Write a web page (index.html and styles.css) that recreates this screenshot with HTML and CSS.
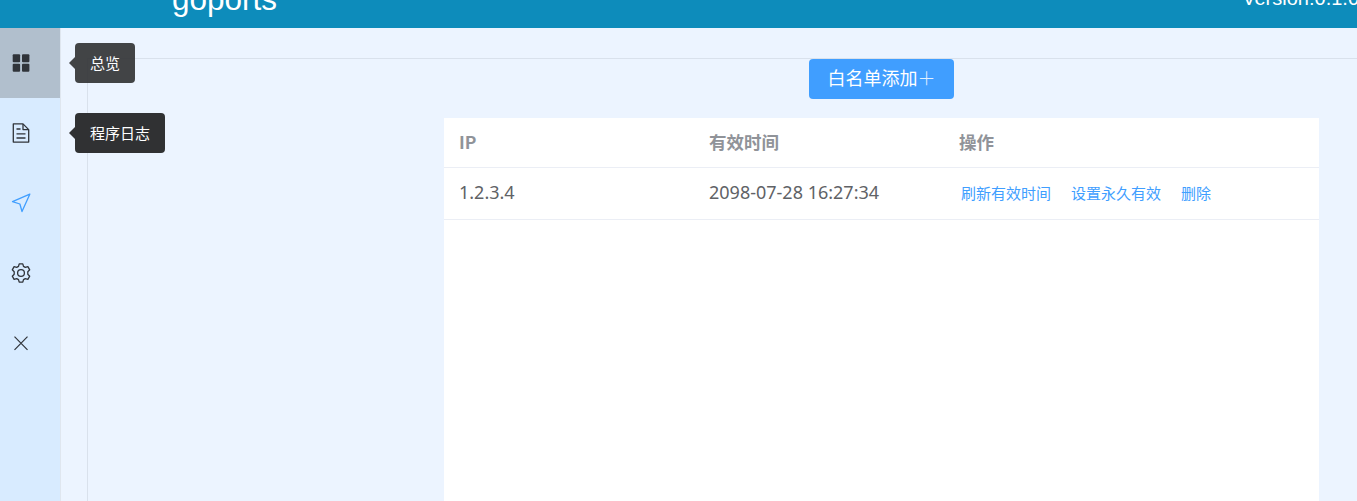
FILE: index.html
```html
<!DOCTYPE html>
<html lang="zh">
<head>
<meta charset="utf-8">
<title>goports</title>
<link rel="stylesheet" href="styles.css">
</head>
<body>
<div class="app">
  <header class="topbar">
    <div class="brand">goports</div>
    <div class="version">Version:0.1.0</div>
  </header>
  <div class="body">
    <nav class="sidebar">
      <div class="nav-item active">
        <svg class="icon" viewBox="0 0 20 20"><g fill="#30343a"><rect x="1.7" y="1.3" width="7.4" height="8" rx="1"/><rect x="11" y="1.3" width="7.4" height="8" rx="1"/><rect x="1.7" y="10.7" width="7.4" height="8" rx="1"/><rect x="11" y="10.7" width="7.4" height="8" rx="1"/></g></svg>
        <div class="tip tip-fade">总览</div>
      </div>
      <div class="nav-item">
        <svg class="icon" viewBox="0 0 20 20"><g fill="none" stroke="#30343a" stroke-width="1.3" stroke-linejoin="round"><path d="M2.300 .9h9.700l5.700 5.700v12.500H2.300z"/><path d="M12 .9v5.700h5.700"/><path d="M5.500 6h4M5.500 10.800h9M5.500 15h9"/></g></svg>
        <div class="tip">程序日志</div>
      </div>
      <div class="nav-item">
        <svg class="icon" viewBox="0 0 20 20"><path d="M18.800 1.200 1.500 8.600 8.900 11 11 18.500z" fill="none" stroke="#409eff" stroke-width="1.300" stroke-linejoin="round"/></svg>
      </div>
      <div class="nav-item">
        <svg class="icon" viewBox="0 0 20 20"><g fill="none" stroke="#30343a" stroke-width="1.300" stroke-linejoin="round"><path d="M8.200 .8h3.600l.7 2.600 1.800 1 2.600-.7 1.800 3.100-1.900 1.900v2.600l1.900 1.900-1.800 3.100-2.600-.7-1.800 1-.7 2.600H8.200l-.7-2.600-1.800-1-2.600.7-1.800-3.100 1.900-1.900V8.700L1.300 6.800l1.800-3.100 2.600.7 1.800-1z"/><circle cx="10" cy="10" r="3.400"/></g></svg>
      </div>
      <div class="nav-item">
        <svg class="icon" viewBox="0 0 20 20"><path d="M3.500 3.700l13 13.100M16.500 3.700l-13 13.100" fill="none" stroke="#30343a" stroke-width="1.200"/></svg>
      </div>
    </nav>
    <main class="main">
      <div class="panel">
        <div class="toolbar"><button class="add-btn">白名单添加<span class="plus">＋</span></button></div>
        <div class="table">
          <div class="row head">
            <div class="cell c1">IP</div>
            <div class="cell c2">有效时间</div>
            <div class="cell c3">操作</div>
          </div>
          <div class="row data">
            <div class="cell c1">1.2.3.4</div>
            <div class="cell c2">2098-07-28 16:27:34</div>
            <div class="cell c3 links"><a>刷新有效时间</a><a>设置永久有效</a><a>删除</a></div>
          </div>
        </div>
      </div>
    </main>
  </div>
</div>
</body>
</html>
```
FILE: styles.css
```css
* { box-sizing: border-box; }
html, body { margin: 0; height: 100%; overflow: hidden; }
body { font-family: "Noto Sans", "Noto Sans CJK SC", sans-serif; background: #ecf4ff; }
.app { height: 501px; display: flex; flex-direction: column; overflow: hidden; }
.topbar { flex: 0 0 28px; background: #0d8cbb; color: #fff; display: flex; align-items: flex-start; justify-content: space-between; overflow: hidden; padding-left: 172px; font-family: "Liberation Sans", Arial, sans-serif; }
.brand { font-size: 31.5px; line-height: 32px; margin-top: -17px; }
.version { font-size: 20px; line-height: 20px; margin-top: -12px; margin-right: -2px; }
.body { flex: 1; display: flex; min-height: 0; }
.sidebar { flex: 0 0 61px; background: #d8ebff; border-right: 1px solid #dfe6ef; display: flex; flex-direction: column; }
.nav-item { height: 70px; display: flex; align-items: center; padding-left: 11px; position: relative; }
.nav-item.active { background: #b1bfcd; }
.icon { width: 20px; height: 20px; display: block; }
.tip { position: absolute; left: 75px; top: 15px; height: 40px; padding: 0 15px; border-radius: 4px; background: #303133; color: #fff; font-size: 15px; line-height: 39px; white-space: nowrap; z-index: 5; font-family: "Noto Sans CJK SC", sans-serif; }
.tip::before { content: ""; position: absolute; left: -6px; top: 14px; border: 6px solid transparent; border-left-width: 0; border-right-color: #303133; }
.tip-fade { opacity: 0.9; }
.main { flex: 1; padding: 30px 0 0 26px; min-width: 0; }
.panel { height: 100%; border-left: 1px solid #d9e1ec; border-top: 1px solid #d9e1ec; padding-right: 38px; display: flex; flex-direction: column; align-items: flex-end; }
.toolbar { width: 875px; display: flex; justify-content: center; }
.add-btn { width: 145px; height: 40px; border: 0; border-radius: 4px; background: #409eff; color: #fff; font: 18px/37px "Noto Sans CJK SC", sans-serif; padding: 0 0 3px; }
.plus { font-weight: 300; opacity: 0.85; }
.table { width: 875px; flex: 1; margin-top: 19px; background: #fff; font-size: 18px; }
.row { display: flex; border-bottom: 1px solid #ebeef5; align-items: center; }
.head { height: 50px; color: #909399; font-weight: 700; font-size: 17.5px; padding-bottom: 2px; font-family: "Noto Sans CJK SC", sans-serif; }
.data { height: 52px; color: #606266; padding-bottom: 3px; }
.cell { padding-left: 15px; }
.c1, .c2 { width: 250px; }
.links { display: flex; gap: 20px; padding-left: 17px; font-size: 15px; color: #409eff; font-family: "Noto Sans CJK SC", sans-serif; }
```
